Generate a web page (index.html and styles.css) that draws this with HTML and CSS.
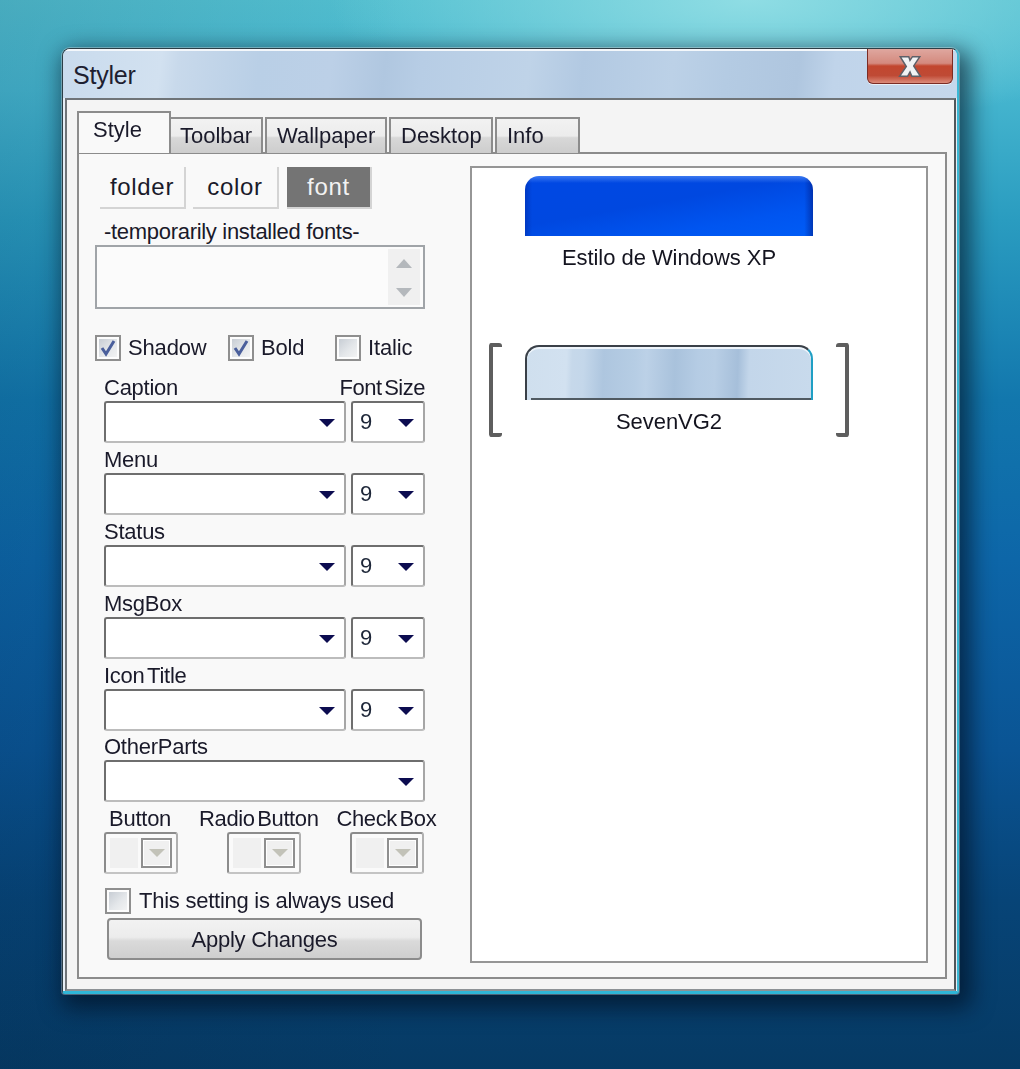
FILE: index.html
```html
<!DOCTYPE html>
<html lang="en">
<head>
    <meta charset="UTF-8">
    <meta name="viewport" content="width=device-width, initial-scale=1.0">
    <title>Styler</title>
    <link rel="stylesheet" href="styles.css">
</head>
<body>
    <div class="window">
        <div class="titlebar">
            <span class="title">Styler</span>
            <div class="close">
                <svg width="32" height="27" viewBox="0 0 26 22">
                    <path class="close-x" d="M5 3 L12 3 L13 6 L15 3 L21 3 L16 10.5 L21.5 19 L14.5 19 L13 15.5 L11 19 L4.5 19 L10 11 Z"/>
                </svg>
            </div>
        </div>

        <div class="client">
            <div class="tabs">
                <div class="tab active tab-style">Style</div>
                <div class="tab tab-toolbar">Toolbar</div>
                <div class="tab tab-wallpaper">Wallpaper</div>
                <div class="tab tab-desktop">Desktop</div>
                <div class="tab tab-info">Info</div>
            </div>

            <div class="panel">
                <div class="settings">
                    <div class="modes">
                        <div class="mode">folder</div>
                        <div class="mode">color</div>
                        <div class="mode on">font</div>
                    </div>

                    <div class="label fonts-label">-temporarily installed fonts-</div>
                    <div class="listbox">
                        <div class="scrollbar">
                            <span class="arrow-up"></span>
                            <span class="arrow-down"></span>
                        </div>
                    </div>

                    <div class="checks">
                        <div class="check check-shadow">
                            <span class="box">
                                <svg width="18" height="18" viewBox="0 0 18 18"><path class="tick" d="M3 9 L7 15 L15 2"/></svg>
                            </span>
                            Shadow
                        </div>
                        <div class="check check-bold">
                            <span class="box">
                                <svg width="18" height="18" viewBox="0 0 18 18"><path class="tick" d="M3 9 L7 15 L15 2"/></svg>
                            </span>
                            Bold
                        </div>
                        <div class="check">
                            <span class="box"></span>
                            Italic
                        </div>
                    </div>

                    <div class="fields">
                        <div class="field-head">
                            <span class="label">Caption</span>
                            <span class="label size-head">Font Size</span>
                        </div>
                        <div class="field-row">
                            <div class="combo wide"><span class="caret"></span></div>
                            <div class="combo small"><span class="value">9</span><span class="caret"></span></div>
                        </div>

                        <div class="field-head"><span class="label">Menu</span></div>
                        <div class="field-row">
                            <div class="combo wide"><span class="caret"></span></div>
                            <div class="combo small"><span class="value">9</span><span class="caret"></span></div>
                        </div>

                        <div class="field-head"><span class="label">Status</span></div>
                        <div class="field-row">
                            <div class="combo wide"><span class="caret"></span></div>
                            <div class="combo small"><span class="value">9</span><span class="caret"></span></div>
                        </div>

                        <div class="field-head"><span class="label">MsgBox</span></div>
                        <div class="field-row">
                            <div class="combo wide"><span class="caret"></span></div>
                            <div class="combo small"><span class="value">9</span><span class="caret"></span></div>
                        </div>

                        <div class="field-head"><span class="label icon-title">Icon Title</span></div>
                        <div class="field-row">
                            <div class="combo wide"><span class="caret"></span></div>
                            <div class="combo small"><span class="value">9</span><span class="caret"></span></div>
                        </div>

                        <div class="field-head field-head-last"><span class="label">OtherParts</span></div>
                        <div class="field-row">
                            <div class="combo full"><span class="caret"></span></div>
                        </div>
                    </div>

                    <div class="color-heads">
                        <span class="label">Button</span>
                        <span class="label">Radio Button</span>
                        <span class="label">Check Box</span>
                    </div>
                    <div class="color-row">
                        <div class="color-combo"><span class="swatch"></span><span class="drop"><span class="drop-caret"></span></span></div>
                        <div class="color-combo"><span class="swatch"></span><span class="drop"><span class="drop-caret"></span></span></div>
                        <div class="color-combo"><span class="swatch"></span><span class="drop"><span class="drop-caret"></span></span></div>
                    </div>

                    <div class="check always">
                        <span class="box"></span>
                        This setting is always used
                    </div>
                    <div class="apply">Apply Changes</div>
                </div>

                <div class="previews">
                    <div class="preview">
                        <div class="thumb thumb-xp"></div>
                        <div class="thumb-name">Estilo de Windows XP</div>
                    </div>
                    <div class="preview selected">
                        <div class="thumb thumb-seven"></div>
                        <div class="thumb-name">SevenVG2</div>
                    </div>
                </div>
            </div>
        </div>
    </div>
</body>
</html>
```

FILE: styles.css
```css
html, body {
    margin: 0;
    height: 1069px;
    overflow: hidden;
}

body {
    font-family: "Liberation Sans", Arial, sans-serif;
    font-size: 22px;
    color: #1a1a2a;
    padding: 48px 0 0 62px;
    box-sizing: border-box;
    background:
        radial-gradient(ellipse 420px 130px at 750px 0, #8fdde4 0%, rgba(143, 221, 228, 0) 100%),
        linear-gradient(90deg, rgba(0, 30, 60, 0.12) 0%, rgba(0, 0, 0, 0) 40%),
        linear-gradient(180deg, #52bfd0 0%, #46b6cf 90px, #2a9cc0 220px, #1277ad 400px, #0d66a8 560px, #0a5494 750px, #074477 900px, #063a64 1069px);
}

/* window */
.window {
    width: 897px;
    height: 946px;
    box-sizing: border-box;
    border: 1px solid #2c3e46;
    border-bottom: 3px solid #2fb6d8;
    border-right: 2px solid #3ab8d4;
    border-radius: 8px 8px 3px 3px;
    box-shadow: 0 0 0 1px rgba(255, 255, 255, 0.3), 6px 8px 22px 6px rgba(0, 10, 25, 0.6);
    background: #e6eef6;
    display: flex;
    flex-direction: column;
    overflow: hidden;
    filter: blur(0.45px);
}

.titlebar {
    height: 49px;
    flex: none;
    box-sizing: border-box;
    border-top: 2px solid #f3f7fb;
    display: flex;
    justify-content: space-between;
    align-items: flex-start;
    background: linear-gradient(97deg,
        #c9dbed 0%, #d2e1f0 11%, #c8d9eb 13%, #b9cfe6 22%, #bcd0e7 30%, #b0c7e0 36%,
        #b7cde5 40%, #bfd3e8 52%, #b2c9e2 58%, #bcd1e7 68%, #b4cbe3 74%, #afc6df 82%,
        #c0d4ea 86%, #c5d8ec 100%);
}

.title {
    margin: 10px 0 0 10px;
    font-size: 25px;
    letter-spacing: -0.2px;
    color: #1d2030;
}

.close {
    width: 86px;
    height: 35px;
    margin-right: 4px;
    margin-top: -2px;
    box-sizing: border-box;
    border: 1px solid #7c2c24;
    border-top: none;
    border-radius: 0 0 6px 6px;
    background: linear-gradient(180deg, #dfa79f 0%, #d48a7e 42%, #c2472f 50%, #bf4a35 78%, #dc8b7a 100%);
    box-shadow: 0 1px 0 #ffffffa0;
    display: flex;
    align-items: center;
    justify-content: center;
}

.close-x {
    fill: #f1f3f4;
    stroke: #5e6068;
    stroke-width: 1.2;
}

.client {
    flex: 1;
    margin: 0 1px 0 2px;
    padding: 12px 7px 10px 10px;
    background: #f4f4f4;
    border: 2px solid #6f7478;
    border-bottom-color: #8d9296;
    border-right-color: #50565a;
    display: flex;
    flex-direction: column;
}

/* tabs */
.tabs {
    display: flex;
    align-items: flex-end;
    height: 41px;
    gap: 2px;
    flex: none;
    position: relative;
    z-index: 1;
    margin-bottom: -1px;
}

.tab {
    height: 36px;
    box-sizing: border-box;
    padding: 4px 0 0 10px;
    border: 2px solid #8c8c8c;
    border-bottom: none;
    background: linear-gradient(180deg, #f2f2f2 0%, #ececec 50%, #d8d8d8 55%, #cdcdcd 100%);
}

.tab.active {
    height: 42px;
    padding: 4px 0 0 14px;
    background: #f9f9f9;
    margin-right: -4px;
    position: relative;
    z-index: 2;
}

.tab-style { width: 94px; }
.tab-toolbar { width: 95px; margin-left: -1px; }
.tab-wallpaper { width: 122px; }
.tab-desktop { width: 104px; }
.tab-info { width: 85px; }

.panel {
    flex: 1;
    box-sizing: border-box;
    border: 2px solid #8c8c8c;
    background: #f9f9f9;
    padding: 13px 17px 14px 16px;
    display: flex;
    justify-content: space-between;
}

/* left column */
.settings {
    width: 330px;
}

.modes {
    display: flex;
    gap: 7px;
    margin-left: 5px;
    height: 42px;
}

.mode {
    width: 86px;
    box-sizing: border-box;
    border-right: 2px solid #d4d4d4;
    border-bottom: 2px solid #d4d4d4;
    text-align: center;
    line-height: 40px;
    font-size: 24px;
    letter-spacing: 0.7px;
}

.mode.on {
    background: #747474;
    color: #f2f2f2;
    margin-left: 1px;
    width: 85px;
}

.label {
    white-space: nowrap;
    letter-spacing: -0.25px;
}

.fonts-label {
    margin: 10px 0 0 9px;
    height: 26px;
    line-height: 26px;
    letter-spacing: -0.3px;
}

.listbox {
    height: 64px;
    box-sizing: border-box;
    border: 2px solid #a0a4a8;
    background: #fbfbfb;
    display: flex;
    justify-content: flex-end;
    padding: 2px 3px;
}

.scrollbar {
    width: 32px;
    background: #f0f0f0;
    display: flex;
    flex-direction: column;
    justify-content: space-between;
    align-items: center;
    padding: 10px 0 8px;
    box-sizing: border-box;
}

.arrow-up, .arrow-down {
    width: 0;
    height: 0;
    border-left: 8px solid transparent;
    border-right: 8px solid transparent;
}

.arrow-up { border-bottom: 9px solid #b4b8bc; }
.arrow-down { border-top: 9px solid #b4b8bc; }

.checks {
    display: flex;
    margin-top: 25px;
    height: 27px;
}

.check {
    display: flex;
    align-items: center;
    gap: 7px;
    letter-spacing: -0.15px;
}

.check-shadow { width: 133px; }
.check-bold { width: 107px; }

.box {
    width: 26px;
    height: 26px;
    box-sizing: border-box;
    border: 2px solid #8f8f8f;
    background: linear-gradient(135deg, #c2c8d0 0%, #e4e7ea 55%, #f6f6f6 100%);
    box-shadow: inset 0 0 0 2px #fdfdfd;
    display: flex;
    align-items: center;
    justify-content: center;
    flex: none;
}

.tick {
    fill: none;
    stroke: #4a5f9c;
    stroke-width: 3;
}

.fields {
    margin-top: 14px;
    padding-left: 9px;
}

.field-head {
    height: 26px;
    line-height: 26px;
    display: flex;
    justify-content: space-between;
    width: 321px;
    margin-top: 4px;
}

.fields .field-head:first-child {
    margin-top: 0;
}

.field-head-last {
    margin-top: 3px;
}

.size-head {
    letter-spacing: -0.5px;
    word-spacing: -3px;
}

.icon-title {
    word-spacing: -3px;
}

.field-row {
    display: flex;
    gap: 5px;
    height: 42px;
    width: 321px;
}

.combo {
    height: 42px;
    box-sizing: border-box;
    background: #fff;
    border: 2px solid #6e6e6e;
    border-right-color: #a6a6a6;
    border-bottom-color: #bcbcbc;
    border-radius: 3px;
    display: flex;
    align-items: center;
    justify-content: space-between;
    padding: 0 9px 0 7px;
}

.combo.wide { width: 242px; justify-content: flex-end; }
.combo.small { width: 74px; }
.combo.full { width: 321px; justify-content: flex-end; }

.caret {
    width: 0;
    height: 0;
    border-left: 8px solid transparent;
    border-right: 8px solid transparent;
    border-top: 8px solid #0c0c50;
    margin-top: 2px;
}

.value {
    color: #1d2638;
}

.color-heads {
    display: flex;
    height: 26px;
    line-height: 26px;
    margin: 4px 0 0 14px;
    gap: 28px;
}

.color-heads .label:nth-child(2) { word-spacing: -3px; letter-spacing: -0.4px; }
.color-heads .label:nth-child(3) { word-spacing: -3px; letter-spacing: -0.4px; margin-left: -10px; }

.color-row {
    display: flex;
    gap: 49px;
    margin-left: 9px;
    height: 42px;
}

.color-combo {
    width: 74px;
    box-sizing: border-box;
    border: 2px solid #8c8c8c;
    border-right-color: #b0b0b0;
    border-bottom-color: #c4c4c4;
    border-radius: 3px;
    background: #fafafa;
    padding: 4px;
    display: flex;
    justify-content: space-between;
}

.swatch {
    width: 28px;
    background: #f0f0f0;
}

.drop {
    width: 31px;
    box-sizing: border-box;
    border: 2px solid #8f8f8f;
    background: #f0f0f0;
    box-shadow: inset 0 0 0 1px #fff;
    display: flex;
    align-items: center;
    justify-content: center;
}

.drop-caret {
    width: 0;
    height: 0;
    border-left: 8px solid transparent;
    border-right: 8px solid transparent;
    border-top: 8px solid #c2c2b8;
}

.always {
    margin: 14px 0 0 10px;
    height: 26px;
    gap: 8px;
    letter-spacing: -0.25px;
    white-space: nowrap;
}

.apply {
    width: 315px;
    height: 42px;
    box-sizing: border-box;
    margin: 4px 0 0 12px;
    border: 2px solid #8c8c8c;
    border-radius: 4px;
    background: linear-gradient(180deg, #f2f2f2 0%, #ececec 45%, #dadada 55%, #cfcfcf 100%);
    text-align: center;
    line-height: 39px;
    letter-spacing: -0.25px;
}

/* right column */
.previews {
    width: 458px;
    box-sizing: border-box;
    margin-top: -1px;
    border: 2px solid #969696;
    background: #fff;
    padding-top: 8px;
    display: flex;
    flex-direction: column;
    align-items: center;
}

.preview {
    width: 360px;
    height: 94px;
    box-sizing: border-box;
    margin-left: -60px;
    display: flex;
    flex-direction: column;
    align-items: center;
    position: relative;
}

.preview.selected {
    margin-top: 73px;
    padding-top: 2px;
}

.preview.selected::before,
.preview.selected::after {
    content: "";
    position: absolute;
    top: 0;
    bottom: 0;
    width: 9px;
    border: 4px solid #5e5e5e;
    border-radius: 3px;
}

.preview.selected::before {
    left: 0;
    border-right: none;
}

.preview.selected::after {
    right: 0;
    border-left: none;
}

.thumb {
    width: 288px;
    box-sizing: border-box;
    border-radius: 14px 14px 0 0;
    flex: none;
}

.thumb-xp {
    height: 60px;
    background:
        linear-gradient(180deg, rgba(120, 170, 255, 0.5) 0, rgba(0, 60, 230, 0) 7px),
        linear-gradient(90deg, rgba(0, 20, 120, 0.3) 0, rgba(0, 20, 120, 0) 7px, rgba(0, 20, 120, 0) 97%, rgba(0, 20, 120, 0.5) 100%),
        linear-gradient(170deg, #0048e4 0%, #0048e0 45%, #0055f0 75%, #005cf6 100%);
}

.thumb-seven {
    height: 55px;
    border: 2px solid #3a4048;
    border-bottom: none;
    border-right-color: #1f9fc4;
    position: relative;
    background: linear-gradient(92deg,
        #cfdfee 0%, #d2e1f0 14%, #c6d8ea 16%, #c4d7ea 20%, #aec6df 27%, #b6cde4 38%,
        #bcd1e7 42%, #a9c2dc 52%, #b5cce4 60%, #b8cee5 66%, #a6bfda 74%, #c3d6ea 78%, #c8daec 100%);
    box-shadow: inset 0 2px 0 #eef4fa;
}

.thumb-seven::after {
    content: "";
    position: absolute;
    left: 4px;
    right: 0;
    bottom: 0;
    height: 2px;
    background: #505a62;
}

.thumb-name {
    margin-top: 9px;
    line-height: 26px;
    letter-spacing: -0.05px;
    color: #14141f;
    white-space: nowrap;
}
```
